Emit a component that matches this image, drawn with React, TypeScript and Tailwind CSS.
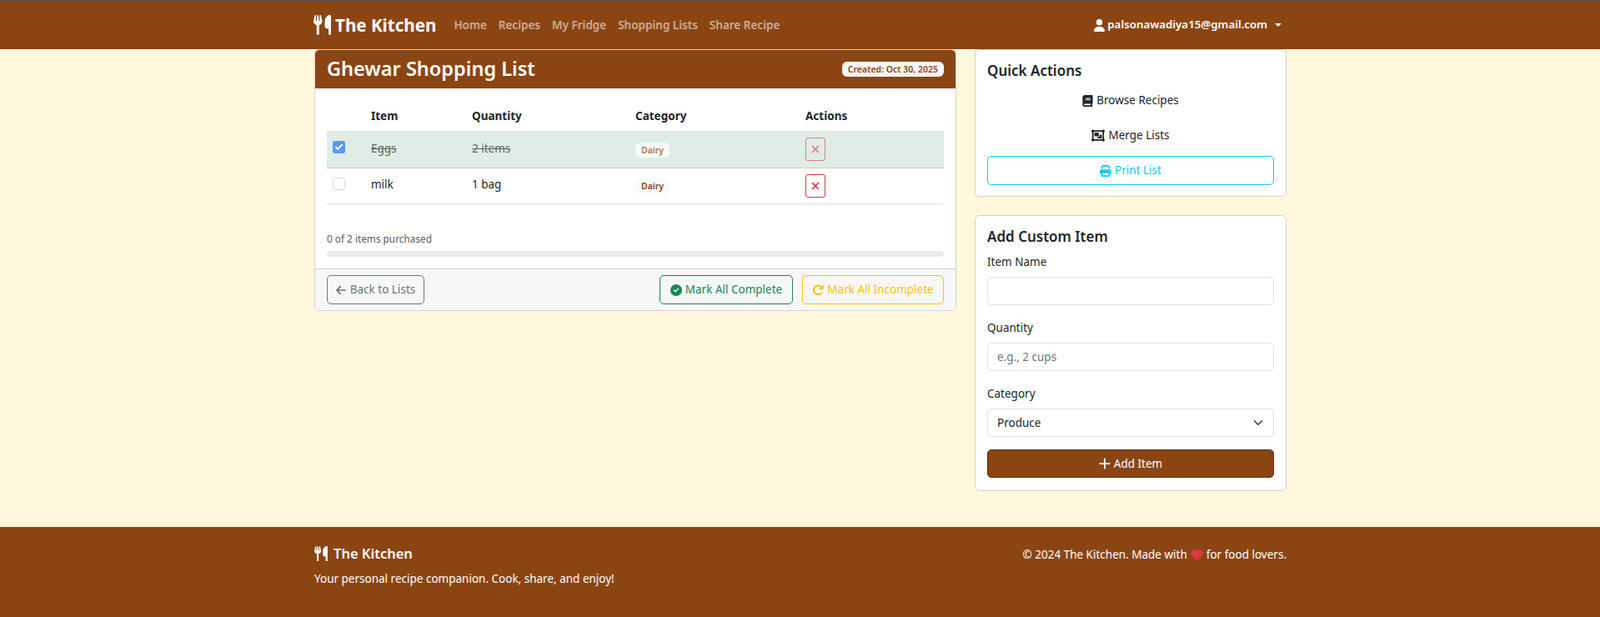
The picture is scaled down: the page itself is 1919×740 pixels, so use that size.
import { FaArrowLeft, FaArrowRotateRight, FaBook, FaCircleCheck, FaHeart, FaObjectGroup, FaPlus, FaPrint, FaUser, FaUtensils, FaXmark } from "react-icons/fa6"
import { ChevronDown, Check } from "lucide-react"

const navLinks = ["Home", "Recipes", "My Fridge", "Shopping Lists", "Share Recipe"]

const items = [
  { name: "Eggs", qty: "2 items", category: "Dairy", done: true },
  { name: "milk", qty: "1 bag", category: "Dairy", done: false },
]

function Navbar() {
  return (
    <nav className="h-[59px] shrink-0 border-t border-t-[#555555] bg-[#8b4513]">
      <div className="mx-auto flex h-full w-[1190px] items-center pl-[12.5px] pr-[11.5px]">
        <a className="-ml-[1px] flex items-center gap-[5px] text-[20.6px] font-bold text-white">
          <FaUtensils className="h-[24px] w-[21px]" />
          The Kitchen
        </a>
        <ul className="ml-[21px] flex gap-[14px] text-[13.5px] font-semibold text-white/55">
          {navLinks.map((link) => (
            <li key={link}>{link}</li>
          ))}
        </ul>
        <div className="ml-auto mr-[6px] flex items-center gap-[3px] text-[13.3px] font-semibold text-white">
          <FaUser className="h-[15px] w-[13px]" />
          palsonawadiya15@gmail.com
          <span className="ml-[6px] h-0 w-0 border-x-[4px] border-t-[4px] border-x-transparent border-t-white" />
        </div>
      </div>
    </nav>
  )
}

function ItemRow({ name, qty, category, done }: (typeof items)[number]) {
  return (
    <tr className={done ? "h-[44px] border-b border-[#c5d0cb] bg-[#dfede6]" : "h-[43px] border-b border-[#dee2e6]"}>
      <td className="px-[7px] pb-[5px] align-middle">
        <div className={done ? "flex h-[15px] w-[15px] items-center justify-center rounded-[3px] bg-[#5b97fb]" : "h-[15px] w-[15px] rounded-[3px] border border-[#d8dbde] bg-white"}>
          {done && <Check className="h-[11px] w-[11px] text-white" strokeWidth={4} />}
        </div>
      </td>
      <td className={done ? "px-2 pb-[2px] text-[#5e6663] line-through" : "px-2 pb-[2px] text-[#212529]"}>{name}</td>
      <td className={done ? "px-2 pb-[2px] text-[#5e6663] line-through" : "px-2 pb-[2px] text-[#212529]"}>{qty}</td>
      <td className="px-2">
        <span className={done ? "inline-block rounded-[6px] bg-white/70 px-[7px] py-[2px] text-[10.5px] font-semibold leading-[14px] text-[#b07a58]" : "inline-block rounded-[6px] bg-[#f8f9fa] px-[7px] py-[2px] text-[10.5px] font-semibold leading-[14px] text-[#8b4513]"}>
          {category}
        </span>
      </td>
      <td className="px-2">
        <button className={done ? "flex h-[28px] w-[24px] items-center justify-center rounded-[3px] border border-[#dc3545] text-[#dc3545] opacity-60" : "flex h-[28px] w-[24px] items-center justify-center rounded-[3px] border border-[#dc3545] text-[#dc3545]"}>
          <FaXmark className="h-[14px] w-[12px]" />
        </button>
      </td>
    </tr>
  )
}

function ListCard() {
  return (
    <section className="w-[770px] shrink-0 overflow-hidden rounded-[6px] border border-[#d4d2cf] bg-white">
      <header className="flex h-[46px] items-center justify-between bg-[#8b4513] px-[14px] text-white">
        <h1 className="text-[23.5px] font-semibold">Ghewar Shopping List</h1>
        <span className="rounded-[6px] bg-[#f8f9fa] px-[7px] py-[2px] text-[10.5px] font-semibold leading-[14px] text-[#8b4513]">Created: Oct 30, 2025</span>
      </header>
      <div className="px-[14px] pt-[14px]">
        <table className="w-full table-fixed border-collapse text-[13.5px]">
          <colgroup>
            <col className="w-[45px]" />
            <col className="w-[121px]" />
            <col className="w-[196px]" />
            <col className="w-[204px]" />
            <col />
          </colgroup>
          <thead>
            <tr className="h-[37px] border-b border-[#dee2e6] text-left font-bold text-[#212529]">
              <th />
              <th className="px-2 pt-[2px]">Item</th>
              <th className="px-2 pt-[2px]">Quantity</th>
              <th className="px-2 pt-[2px]">Category</th>
              <th className="px-2 pt-[2px]">Actions</th>
            </tr>
          </thead>
          <tbody>
            {items.map((item) => (
              <ItemRow key={item.name} {...item} />
            ))}
          </tbody>
        </table>
        <p className="mt-[32px] text-[11.8px] leading-[18px] text-[#565e64]">0 of 2 items purchased</p>
        <div className="mt-[6px] h-[7px] rounded-full bg-[#e9ecef]" />
      </div>
      <footer className="mt-[14px] flex h-[50px] items-center justify-between border-t border-[#cfcfcf] bg-[#f7f7f7] px-[14px] pt-[1px] text-[13.5px]">
        <button className="flex h-[35px] w-[117px] items-center justify-center gap-[5px] rounded-[5px] border border-[#6c757d] pb-[0px] text-[#6c757d]">
          <FaArrowLeft className="h-[14px] w-[12px]" />
          Back to Lists
        </button>
        <div className="flex gap-[11px]">
          <button className="flex h-[35px] w-[160px] items-center justify-center gap-[4px] rounded-[5px] border border-[#198754] text-[#198754]">
            <FaCircleCheck className="h-[14px] w-[14px]" />
            Mark All Complete
          </button>
          <button className="flex h-[35px] w-[170px] items-center justify-center gap-[4px] rounded-[5px] border border-[#ffc107] text-[#ffc107]">
            <FaArrowRotateRight className="h-[14px] w-[14px]" />
            Mark All Incomplete
          </button>
        </div>
      </footer>
    </section>
  )
}

function QuickActions() {
  return (
    <section className="h-[177px] rounded-[6px] border border-[#d4d2cf] bg-white px-[14px] pt-[13px]">
      <h2 className="text-[17px] font-semibold leading-[24px] text-[#212529]">Quick Actions</h2>
      <div className="mt-[6px] flex flex-col text-[13.5px] text-[#212529]">
        <a className="flex h-[35px] items-center justify-center gap-[4px]">
          <FaBook className="h-[14px] w-[13px]" />
          Browse Recipes
        </a>
        <a className="mt-[7px] flex h-[35px] items-center justify-center gap-[4px]">
          <FaObjectGroup className="h-[15px] w-[16px]" />
          Merge Lists
        </a>
        <button className="mt-[7px] flex h-[35px] items-center justify-center gap-[4px] rounded-[5px] border border-[#0dcaf0] text-[#0dcaf0]">
          <FaPrint className="h-[14px] w-[14px]" />
          Print List
        </button>
      </div>
    </section>
  )
}

function AddItem() {
  return (
    <section className="mt-[22px] h-[331px] rounded-[6px] border border-[#d4d2cf] bg-white px-[14px] pt-[13px] text-[13.5px] text-[#212529]">
      <h2 className="text-[17px] font-semibold leading-[24px]">Add Custom Item</h2>
      <form className="mt-[8px]">
        <label className="block leading-[21px]">Item Name</label>
        <input className="mt-[7px] block h-[34px] w-full rounded-[5px] border border-[#dee2e6] px-[11px]" />
        <label className="mt-[17px] block leading-[21px]">Quantity</label>
        <input placeholder="e.g., 2 cups" className="mt-[7px] block h-[34px] w-full rounded-[5px] border border-[#dee2e6] px-[11px] placeholder:text-[#6c757d]" />
        <label className="mt-[17px] block leading-[21px]">Category</label>
        <div className="mt-[7px] flex h-[34px] items-center justify-between rounded-[5px] border border-[#dee2e6] pl-[11px] pr-[9px]">
          Produce
          <ChevronDown className="h-[18px] w-[18px] text-[#343a40]" strokeWidth={2} />
        </div>
        <button type="button" className="mt-[15px] flex h-[34px] w-full items-center justify-center gap-[4px] rounded-[5px] border border-[#5e2f0d] bg-[#8b4513] text-white">
          <FaPlus className="h-[16px] w-[14px]" />
          Add Item
        </button>
      </form>
    </section>
  )
}

function Footer() {
  return (
    <footer className="h-[108px] shrink-0 bg-[#8b4513] text-white">
      <div className="mx-auto flex w-[1190px] justify-between pl-[12.5px] pr-[11.5px] pt-[20px]">
        <div>
          <div className="flex items-center gap-[7px] text-[16.5px] font-semibold leading-[24px]">
            <FaUtensils className="h-[18px] w-[16px]" />
            The Kitchen
          </div>
          <p className="mt-[8px] text-[13.5px] leading-[21px]">Your personal recipe companion. Cook, share, and enjoy!</p>
        </div>
        <p className="mt-[3px] flex h-[21px] items-center gap-[4px] text-[13.5px]">
          © 2024 The Kitchen. Made with
          <FaHeart className="h-[15px] w-[15px] text-[#dc3545]" />
          for food lovers.
        </p>
      </div>
    </footer>
  )
}

export default function App() {
  return (
    <div className="flex h-[740px] flex-col overflow-hidden bg-[#fff8dc] font-['Noto_Sans',sans-serif] text-[13.5px]">
      <Navbar />
      <main className="mx-auto flex w-[1190px] flex-1 items-start gap-[22px] pl-[12.5px] pr-[11.5px]">
        <ListCard />
        <aside className="flex-1">
          <QuickActions />
          <AddItem />
        </aside>
      </main>
      <Footer />
    </div>
  )
}
